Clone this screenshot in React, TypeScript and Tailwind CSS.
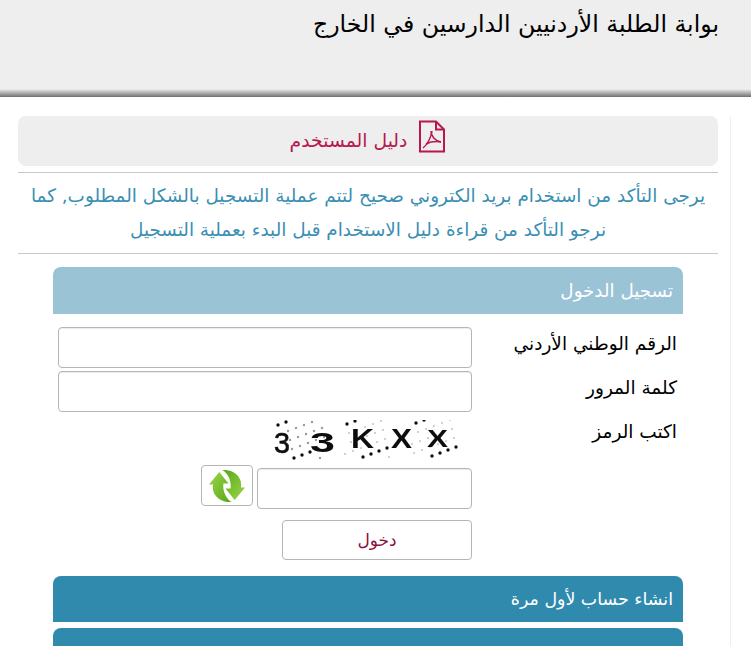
const font = { fontFamily: '"DejaVu Sans", sans-serif' };

// fixed noise, so the captcha comes out the same on every run
const dots = Array.from({ length: 70 }, (_, i) => ({
  x: (i * 67 + 13) % 199,
  y: (i * 29 + 5) % 39,
  r: i % 4 === 0 ? 1.7 : i % 3 === 0 ? 1.2 : 0.8,
}));

function Captcha() {
  return (
    <svg dir="ltr" width="200" height="40" viewBox="0 0 200 40" className="block">
      <defs>
        <filter id="soft">
          <feGaussianBlur stdDeviation="0.35" />
        </filter>
      </defs>
      <g filter="url(#soft)">
        {dots.map((d, i) => (
          <circle key={i} cx={d.x} cy={d.y} r={d.r} fill={i % 4 === 0 ? "#111" : "#999"} />
        ))}
        <g fontFamily='"Liberation Sans", sans-serif' fill="#111" direction="ltr">
          <text x="9" y="33" fontSize="29" stroke="#111" strokeWidth="0.6" textLength="16" lengthAdjust="spacingAndGlyphs">3</text>
          <text x="45" y="32" fontSize="28" fontWeight="700" textLength="25" lengthAdjust="spacingAndGlyphs">3</text>
          <text x="86" y="28" fontSize="27" fontWeight="700" textLength="23" lengthAdjust="spacingAndGlyphs">K</text>
          <text x="126" y="28" fontSize="27" fontWeight="700" textLength="21" lengthAdjust="spacingAndGlyphs">X</text>
          <text x="162" y="27" fontSize="24" fontWeight="700" textLength="21" lengthAdjust="spacingAndGlyphs">X</text>
        </g>
      </g>
    </svg>
  );
}

function PdfIcon() {
  return (
    <svg width="28" height="33" viewBox="0 0 28 33" fill="none" stroke="#b8174f" strokeWidth="2">
      <path d="M2 1.500h16l8 8v22h-24z" />
      <path d="M18 1.500v8h8" />
      <path strokeWidth="1.500" d="M5 28c4-3 8-10 9-17" />
      <path strokeWidth="1.500" d="M13 11c0 5 4 10 10 11" />
      <path strokeWidth="1.500" d="M8 24c4-2 9-3 15-2" />
    </svg>
  );
}

function RefreshIcon() {
  const arrow = "M10 3 0 15h4c-2 9 6 18 18 17-5-3-9-10-8-18h5z";
  return (
    <svg width="36" height="34" viewBox="0 0 35 33">
      <defs>
        <linearGradient id="leaf" x1="0" y1="0" x2="1" y2="1">
          <stop offset="0" stopColor="#9ad84a" />
          <stop offset="1" stopColor="#5aa518" />
        </linearGradient>
      </defs>
      <path fill="url(#leaf)" d={arrow} />
      <path fill="url(#leaf)" transform="rotate(180 17.500 16.500)" d={arrow} />
    </svg>
  );
}

const inputCls = "h-[41px] rounded-[4px] border border-[#b5b5b5] bg-white shadow-[inset_0_1px_1px_rgba(0,0,0,0.08)] outline-none";

export default function App() {
  return (
    <div dir="rtl" style={font} className="h-screen overflow-hidden bg-white text-black">
      <header className="h-[97px] bg-[linear-gradient(#eeeeee_89px,#6f6f6f_97px)] pr-[32px] pt-[8px]">
        <h1 className="text-[23.6px] leading-[32px] font-normal">بوابة الطلبة الأردنيين الدارسين في الخارج</h1>
      </header>

      <div className="mt-[19px] mr-[20px] w-[713px] border-r border-[#eeeeee] pr-[12px]">
        <main className="w-[700px]">
          <a className="flex h-[50px] items-center justify-center gap-[11px] rounded-[8px] bg-[#eeeeee] text-[18.800px] text-[#b8174f]">
            <span className="mb-[10px]"><PdfIcon /></span>
            <span>دليل المستخدم</span>
          </a>
          <div className="mt-[6px] border-y border-[#c8c8c8] py-[6px] text-center text-[18.400px] leading-[34px] text-[#3a8fb3]">
            يرجى التأكد من استخدام بريد الكتروني صحيح لتتم عملية التسجيل بالشكل المطلوب, كما
            <br />
            نرجو التأكد من قراءة دليل الاستخدام قبل البدء بعملية التسجيل
          </div>

          <section className="mx-auto mt-[13px] w-[630px]">
            <div className="flex h-[47px] items-center rounded-t-[8px] bg-[#9ac3d6] pr-[10px] text-[18.300px] text-white">تسجيل الدخول</div>
            <div className="grid grid-cols-[211px_414px] pt-[13px] pb-[8px] pl-[5px] text-[18.500px] leading-[24px]">
              <label className="flex h-[41px] items-center pr-[6px] pb-[8px]">الرقم الوطني الأردني</label>
              <input className={inputCls + " w-[414px]"} />
              <label className="mt-[3px] flex h-[41px] items-center pr-[6px] pb-[8px]">كلمة المرور</label>
              <input className={inputCls + " mt-[3px] w-[414px]"} />
              <label className="mt-[3px] flex h-[41px] items-center pr-[6px] pb-[8px]">اكتب الرمز</label>
              <div className="mt-[8px] w-[414px]">
                <div className="flex justify-start pr-[7px]"><Captcha /></div>
                <div className="mt-[5px] flex items-start gap-[4px]">
                  <input className={inputCls + " mt-[3px] w-[215px]"} />
                  <button className="flex h-[41px] w-[52px] items-center justify-center rounded-[4px] border border-[#b5b5b5] bg-white">
                    <RefreshIcon />
                  </button>
                </div>
                <button className="mt-[11px] block h-[40px] w-[190px] rounded-[4px] border border-[#b5b5b5] bg-white text-[17px] text-[#8b0f3f]">دخول</button>
              </div>
            </div>
            <div className="mt-[8px] flex h-[46px] items-center rounded-t-[8px] bg-[#2f8aad] pr-[10px] text-[17.400px] text-white">انشاء حساب لأول مرة</div>
            <div className="mt-[6px] h-[46px] rounded-t-[8px] bg-[#2f8aad]" />
          </section>
        </main>
      </div>
    </div>
  );
}
